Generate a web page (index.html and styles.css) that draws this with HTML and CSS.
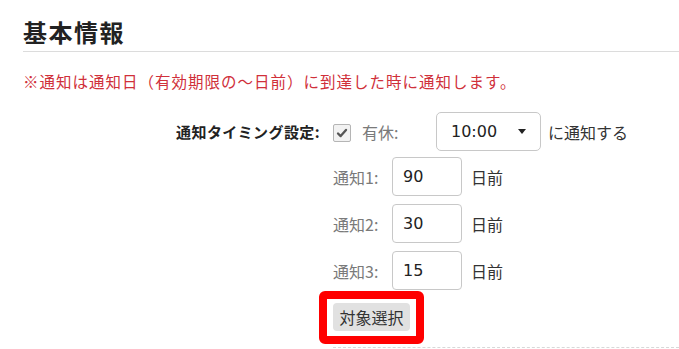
FILE: index.html
```html
<!DOCTYPE html>
<html lang="ja">
<head>
<meta charset="utf-8">
<link rel="stylesheet" href="styles.css">
</head>
<body>
<section class="panel">
  <h2 class="title">基本情報</h2>
  <p class="notice">※通知は通知日（有効期限の〜日前）に到達した時に通知します。</p>
  <div class="form-row">
    <div class="label">通知タイミング設定:</div>
    <div class="value">
      <div class="line">
        <span class="check"><svg viewBox="0 0 18 18" width="18" height="18"><path d="M4.5 9.5 L7.5 12.5 L13.5 5.5" fill="none" stroke="#555" stroke-width="2.6" stroke-linecap="round" stroke-linejoin="round"/></svg></span>
        <span class="sublabel leave">有休:</span>
        <div class="select"><span class="sel-text">10:00</span><span class="caret"></span></div>
        <span class="after">に通知する</span>
      </div>
      <div class="sub">
        <span class="sublabel">通知1:</span>
        <input class="num" type="text" value="90">
        <span class="after unit">日前</span>
      </div>
      <div class="sub">
        <span class="sublabel">通知2:</span>
        <input class="num" type="text" value="30">
        <span class="after unit">日前</span>
      </div>
      <div class="sub">
        <span class="sublabel">通知3:</span>
        <input class="num" type="text" value="15">
        <span class="after unit">日前</span>
      </div>
      <div class="btn-wrap">
        <button class="btn" type="button">対象選択</button>
        <span class="highlight"></span>
      </div>
      <div class="dashed"></div>
    </div>
  </div>
</section>
</body>
</html>
```
FILE: styles.css
```css
html, body {
  margin: 0;
  padding: 0;
  background: #fff;
}
body {
  font-family: "Noto Sans CJK JP", "Noto Sans", sans-serif;
  color: #333;
  overflow: hidden;
}
.panel {
  margin-left: 23px;
}
.title {
  margin: 0;
  padding: 16px 0 3px 0;
  font-size: 24px;
  line-height: 32px;
  font-weight: 700;
  letter-spacing: 1.5px;
  color: #222;
  border-bottom: 1px solid #dcdcdc;
}
.notice {
  margin: 17px 0 0 0;
  font-size: 15.5px;
  line-height: 24px;
  letter-spacing: 1px;
  color: #d0303a;
}
.form-row {
  display: grid;
  grid-template-columns: 297px 1fr;
  column-gap: 13px;
  margin-top: 19px;
}
.label {
  text-align: right;
  font-weight: 700;
  font-size: 15px;
  letter-spacing: 0.4px;
  line-height: 39px;
  color: #222;
}
.value {
  display: flex;
  flex-direction: column;
}
.line, .sub {
  display: flex;
  align-items: center;
  height: 39px;
}
.sub {
  margin-top: 8px;
}
.line + .sub {
  margin-top: 6px;
}
.check {
  width: 16px;
  height: 16px;
  border: 1px solid #b5b5b5;
  background: #f2f2f2;
  border-radius: 2px;
  display: flex;
  align-items: center;
  justify-content: center;
  margin-top: 2px;
}
.check svg {
  width: 16px;
  height: 16px;
}
.sublabel {
  font-size: 16px;
  color: #7a7a7a;
  width: 59px;
  flex: none;
}
.leave {
  margin-left: 11px;
  width: 74px;
}
.select {
  box-sizing: border-box;
  width: 105px;
  height: 39px;
  border: 1px solid #c8c8c8;
  border-radius: 5px;
  display: flex;
  align-items: center;
  padding-left: 14px;
  padding-right: 14px;
}
.sel-text {
  font-family: "DejaVu Sans", "Noto Sans", sans-serif;
  font-size: 16px;
  color: #222;
  flex: 1;
}
.caret {
  width: 0;
  height: 0;
  border-left: 4px solid transparent;
  border-right: 4px solid transparent;
  border-top: 5px solid #222;
}
.after {
  font-size: 16px;
  color: #333;
  margin-left: 7px;
}
.unit {
  margin-left: 9px;
}
.num {
  box-sizing: border-box;
  width: 70px;
  height: 39px;
  border: 1px solid #c8c8c8;
  border-radius: 4px;
  padding: 0 0 0 10px;
  margin: 0;
  font-family: "DejaVu Sans", "Noto Sans", sans-serif;
  font-size: 16px;
  color: #222;
  background: #fff;
  outline: none;
}
.btn-wrap {
  position: relative;
  margin-top: 13px;
  align-self: flex-start;
}
.btn {
  display: block;
  box-sizing: border-box;
  width: 77px;
  height: 28px;
  border: none;
  border-radius: 4px;
  background: #e1e1e1;
  color: #333;
  font-family: "Noto Sans CJK JP", sans-serif;
  font-size: 16px;
  padding: 0;
  margin: 0;
}
.highlight {
  position: absolute;
  left: -14px;
  right: -14px;
  top: -12px;
  bottom: -13px;
  border: 8px solid #ff0000;
  border-radius: 6px;
}
.dashed {
  margin-top: 16px;
  border-top: 1px dashed #d8d8d8;
}
```
